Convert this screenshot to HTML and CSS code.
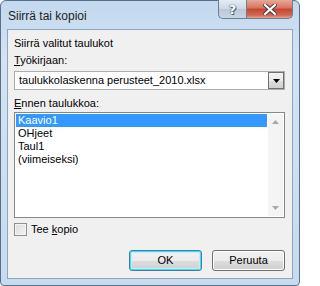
FILE: index.html
```html
<!DOCTYPE html>
<html>
<head>
<meta charset="utf-8">
<link rel="stylesheet" href="styles.css">
</head>
<body>
<div class="window">
  <div class="titlebar">
    <span class="title">Siirrä tai kopioi</span>
    <div class="caption-btns">
      <div class="cbtn help">?</div>
      <div class="cbtn close">
        <svg width="14" height="11" viewBox="0 0 14 11"><path d="M2 1 L12 10 M12 1 L2 10" stroke="#3b3b3b" stroke-width="4" stroke-linecap="square"/><path d="M2 1 L12 10 M12 1 L2 10" stroke="#ffffff" stroke-width="2.2" stroke-linecap="square"/></svg>
      </div>
    </div>
  </div>
  <div class="client">
    <div class="label first">Siirrä valitut taulukot</div>
    <div class="label"><u>T</u>yökirjaan:</div>
    <div class="combo">
      <span class="combo-text">taulukkolaskenna perusteet_2010.xlsx</span>
      <div class="combo-btn"><svg width="7" height="4" viewBox="0 0 7 4"><path d="M0 0 H7 L3.5 4 Z" fill="#000"/></svg></div>
    </div>
    <div class="label third"><u>E</u>nnen taulukkoa:</div>
    <div class="list">
      <div class="items">
        <div class="item selected">Kaavio1</div>
        <div class="item">OHjeet</div>
        <div class="item">Taul1</div>
        <div class="item">(viimeiseksi)</div>
      </div>
      <div class="scroll">
        <svg width="7" height="4" viewBox="0 0 7 4"><path d="M0 4 H7 L3.5 0 Z" fill="#a8a8a8"/></svg>
        <svg width="7" height="4" viewBox="0 0 7 4"><path d="M0 0 H7 L3.5 4 Z" fill="#a8a8a8"/></svg>
      </div>
    </div>
    <div class="check-row">
      <div class="checkbox"></div>
      <span>Tee <u>k</u>opio</span>
    </div>
    <div class="buttons">
      <div class="btn default">OK</div>
      <div class="btn">Peruuta</div>
    </div>
  </div>
</div>
</body>
</html>
```
FILE: styles.css
```css
html, body {
  margin: 0;
  padding: 0;
  background: #ffffff;
}
body {
  font-family: "Liberation Sans", Arial, sans-serif;
  font-size: 11px;
  color: #000;
}
.window {
  width: 300px;
  height: 286px;
  box-sizing: border-box;
  background: linear-gradient(180deg, #c3d8ee 0%, #d3e3f3 20%, #c7dbef 100%);
  border: 1px solid #59708a;
  border-radius: 6px 6px 4px 4px;
  display: flex;
  flex-direction: column;
}
.titlebar {
  height: 28px;
  display: flex;
  align-items: flex-start;
  justify-content: space-between;
  padding-left: 7px;
}
.title {
  margin-top: 7px;
  font-size: 12px;
  line-height: 16px;
  color: #1e1e1e;
}
.caption-btns {
  display: flex;
  margin-right: 6px;
  margin-top: -1px;
}
.cbtn {
  height: 19px;
  box-sizing: border-box;
  border: 1px solid #6b7f95;
  border-top: none;
  display: flex;
  align-items: center;
  justify-content: center;
}
.help {
  width: 28px;
  border-radius: 0 0 0 5px;
  border-right: none;
  background: linear-gradient(180deg, #e4ecf4 0%, #cdd8e4 50%, #b9c8d8 51%, #c9d6e3 100%);
  color: #ffffff;
  font-family: "DejaVu Sans", sans-serif;
  font-weight: bold;
  font-size: 13px;
  text-shadow: 0 0 1px #3c4a5a, 0 0 1px #3c4a5a, 1px 1px 0 #56657a;
}
.close {
  width: 47px;
  border-radius: 0 0 5px 0;
  background: linear-gradient(180deg, #e8a898 0%, #d7725f 45%, #c74331 50%, #d06a55 85%, #e6a493 100%);
}
.client {
  flex: 1;
  margin: 0 6px 6px 6px;
  background: #f0f0f0;
  border: 1px solid #8da5bf;
  padding: 0 7px 0 6px;
  display: flex;
  flex-direction: column;
}
.label {
  line-height: 15px;
  height: 15px;
  margin-top: 2px;
  white-space: nowrap;
}
.label.first {
  margin-top: 6px;
}
.label.third {
  margin-top: 6px;
}
.combo {
  margin-top: 3px;
  height: 19px;
  box-sizing: border-box;
  border: 1px solid #abadb3;
  background: #fff;
  display: flex;
  align-items: center;
  justify-content: space-between;
}
.combo-text {
  padding-left: 4px;
  line-height: 15px;
  white-space: nowrap;
}
.combo-btn {
  width: 16px;
  height: 17px;
  box-sizing: border-box;
  border: 1px solid #707070;
  background: linear-gradient(180deg, #f2f2f2 0%, #ebebeb 50%, #dddddd 51%, #cfcfcf 100%);
  display: flex;
  align-items: center;
  justify-content: center;
}
.list {
  margin-top: 1px;
  height: 106px;
  box-sizing: border-box;
  border: 1px solid #828790;
  background: #fff;
  display: flex;
}
.items {
  flex: 1;
  padding: 1px 0 0 1px;
}
.item {
  height: 13px;
  line-height: 13px;
  padding-left: 2px;
  white-space: nowrap;
}
.item.selected {
  background: #3399ff;
  color: #fff;
}
.scroll {
  width: 15px;
  margin: 1px;
  background: #f4f4f4;
  display: flex;
  flex-direction: column;
  align-items: center;
  justify-content: space-between;
  padding: 6px 0 6px 0;
  box-sizing: border-box;
}
.check-row {
  margin-top: 5px;
  display: flex;
  align-items: center;
  height: 13px;
}
.checkbox {
  width: 13px;
  height: 13px;
  box-sizing: border-box;
  border: 1px solid #8e8f8f;
  background: linear-gradient(135deg, #dcdcdc 0%, #f4f4f4 100%);
  box-shadow: inset 0 0 0 1px #f4f4f4;
  margin-right: 4px;
}
.check-row span {
  line-height: 15px;
}
.buttons {
  margin-top: 14px;
  display: flex;
  justify-content: flex-end;
  gap: 10px;
}
.btn {
  width: 73px;
  height: 21px;
  box-sizing: border-box;
  border: 1px solid #707070;
  border-radius: 3px;
  background: linear-gradient(180deg, #f2f2f2 0%, #ebebeb 50%, #dddddd 51%, #cfcfcf 100%);
  box-shadow: inset 0 0 0 1px #fcfcfc;
  display: flex;
  align-items: center;
  justify-content: center;
  line-height: 15px;
}
.btn.default {
  border-color: #3c7fb1;
  box-shadow: inset 0 0 0 1px #48d9f9, inset 0 0 0 2px #cbeaf5;
}
```
